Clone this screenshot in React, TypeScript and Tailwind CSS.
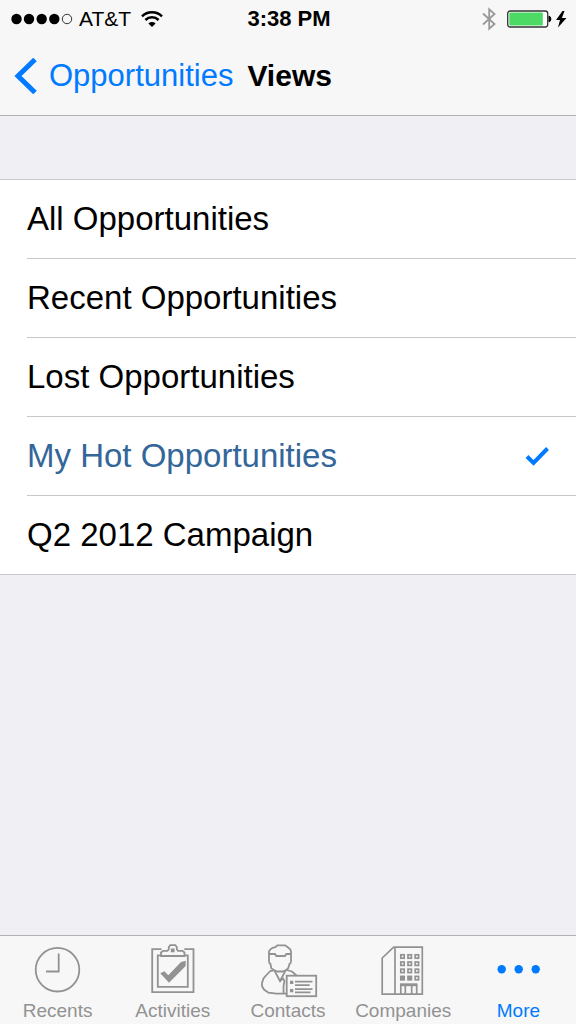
import { useState } from "react";

const views = [
  "All Opportunities",
  "Recent Opportunities",
  "Lost Opportunities",
  "My Hot Opportunities",
  "Q2 2012 Campaign",
];

const SignalDots = () => (
  <svg className="h-3 w-[62px]" viewBox="0 0 62 12" aria-hidden="true">
    <circle cx="5.5" cy="6" r="5.2" />
    <circle cx="18" cy="6" r="5.2" />
    <circle cx="30.7" cy="6" r="5.2" />
    <circle cx="43.3" cy="6" r="5.2" />
    <circle cx="56" cy="6" r="4.7" fill="none" stroke="#333" />
  </svg>
);

const WifiIcon = () => (
  <svg className="h-4 w-[22px]" viewBox="0 0 22 16" aria-hidden="true">
    <path d="M11 16 7.4 12.4a5.2 5.2 0 0 1 7.2 0Z" />
    <path
      d="M4.4 9a9.4 9.4 0 0 1 13.2 0M1 5.4a14.2 14.2 0 0 1 20 0"
      fill="none"
      stroke="black"
      strokeWidth="2.5"
    />
  </svg>
);

const BluetoothIcon = () => (
  <svg className="h-6 w-[14px]" viewBox="0 0 14 24" aria-hidden="true">
    <path
      d="M1 6.5 12.5 17 7.2 21.7V2.3L12.5 7 1 17.5"
      fill="none"
      stroke="#999"
      strokeWidth="1.8"
    />
  </svg>
);

const BatteryIcon = () => (
  <svg className="h-[18px] w-[60px]" viewBox="0 0 60 18" aria-hidden="true">
    <rect x="0.7" y="1" width="40" height="16" rx="2.5" fill="white" stroke="#333" strokeWidth="1.3" />
    <rect x="2.3" y="2.6" width="33.5" height="12.8" rx="1" fill="#4cd964" />
    <path d="M42 6.2c2.4 0 2.4 5.6 0 5.6Z" stroke="black" />
    <path d="M55.5 1 49 10h4l-2 7.5 8.5-9.5h-4.6l2.6-7Z" />
  </svg>
);

const ClockIcon = () => (
  <svg className="h-14 w-[60px]" viewBox="0 0 60 56" fill="none" stroke="#929292" strokeWidth="1.8" aria-hidden="true">
    <circle cx="29.5" cy="27.7" r="21.8" />
    <path d="M30.7 11.5v18H18" />
  </svg>
);

const ClipboardIcon = () => (
  <svg className="h-14 w-[60px]" viewBox="0 0 60 56" fill="none" stroke="#929292" strokeWidth="1.8" aria-hidden="true">
    <path d="M18.5 7.2H9.2v43h41.3v-43h-9.2" />
    <path d="M18 13.3h-3.2v31.5h30V13.3h-3" />
    <path d="M18 14v-3.5l2-1.7h4.5l1.3-1.6V5l1.5-1.8h5L33.8 5v2.2l1.2 1.6h4.5l2 1.7V14Z" />
    <path d="M28.7 9.3V7.5h2v1.8Z" />
    <path
      d="M17.3 31.3 21.3 29.3 25.3 33.3 38 20 42.7 18.7V24L26 40.7Z"
      fill="#929292"
      stroke="none"
    />
  </svg>
);

const ContactIcon = () => (
  <svg className="h-14 w-[60px]" viewBox="0 0 60 56" fill="none" stroke="#929292" strokeWidth="1.8" aria-hidden="true">
    <path d="M11 20.5V9.3l1.5-2 2-1.5 3-.7 1.7-1.8h8l2.2 1.7 2.6 2 1 2.3v11.2" />
    <path d="M11 12h6l1.3 2H27l1.3-2h4.5" />
    <path d="M11 20.5 12.5 22l.8 4.3 3 2L22 39l5.7-10.7 2.5-2L31.5 22l1.5-1.5" />
    <path d="m16.3 28.3 3 1.2h5.4l3-1.2" />
    <path d="M15.5 28.3 12.3 29 8 33.5 5.5 36.5 4 41v3.2l2 3.3 4.5 3.2 8 1h10" />
    <path d="M28.5 28 34 29.5l4.5 4M22 39l3-2.5 1.5 2.5-1 5v7" />
    <rect x="28.7" y="33.7" width="29.5" height="20.5" fill="#f7f7f7" />
    <path d="M37 39.7h17.5M37 43.2h14.7M37 47.2h17.5M37 50.3h15.5" />
    <path d="M32 38.7h3.3V42H32ZM32 47h3.3v3.3H32Z" fill="#929292" stroke="none" />
  </svg>
);

const BuildingIcon = () => (
  <svg className="h-14 w-[60px]" viewBox="0 0 60 56" fill="none" stroke="#929292" strokeWidth="1.7" aria-hidden="true">
    <path d="M9.2 52.2V16L20.7 5.2h28.6v47ZM22 5.2v47" />
    {[12.8, 20, 27.2, 34.4].map((y) =>
      [27.8, 35, 42.2].map((x) => (
        <rect
          key={`${x}-${y}`}
          x={x}
          y={y}
          width="3.4"
          height="3.4"
          fill={y > 34 && x < 40 ? "#929292" : "none"}
        />
      )),
    )}
    <path d="M27 41.3h17.5v2.9H27Z" fill="#929292" stroke="none" />
    <path d="M27.8 43v9M32.3 43v9M38.7 43v9M43.7 43v9" />
  </svg>
);

const MoreIcon = () => (
  <svg className="h-14 w-[60px]" viewBox="0 0 60 56" fill="#007aff" aria-hidden="true">
    <circle cx="13.7" cy="27.3" r="4.2" />
    <circle cx="30.7" cy="27.3" r="4.2" />
    <circle cx="47.7" cy="27.3" r="4.2" />
  </svg>
);

const tabs = [
  { label: "Recents", Icon: ClockIcon },
  { label: "Activities", Icon: ClipboardIcon },
  { label: "Contacts", Icon: ContactIcon },
  { label: "Companies", Icon: BuildingIcon },
  { label: "More", Icon: MoreIcon, active: true },
];

const App = () => {
  const [selected, setSelected] = useState("My Hot Opportunities");

  return (
    <div className="flex min-h-screen flex-col bg-[#efeff4] font-['Liberation_Sans',Arial,sans-serif] text-black">
      <header className="border-b border-[#b2b2b6] bg-[#f7f7f7]">
        <div className="grid h-[37px] grid-cols-[1fr_auto_1fr] items-center pr-[9px] pl-[11px]">
          <div className="flex items-center gap-1.5">
            <SignalDots />
            <span className="text-[21px] leading-6">AT&amp;T</span>
            <span className="pl-1">
              <WifiIcon />
            </span>
          </div>
          <time className="text-[22px] leading-6 font-bold">3:38 PM</time>
          <div className="flex items-center justify-end gap-[11px]">
            <BluetoothIcon />
            <BatteryIcon />
          </div>
        </div>

        <div className="flex h-[78px] items-center gap-[14px] px-[14px]">
          <button type="button" className="flex items-center gap-3 text-[#007aff]">
            <svg className="h-9 w-[23px]" viewBox="0 0 23 36" aria-hidden="true">
              <path d="M21 1.5 4 18l17 16.5" fill="none" stroke="currentColor" strokeWidth="5" />
            </svg>
            <span className="text-[31px] leading-9">Opportunities</span>
          </button>
          <h1 className="text-[30px] leading-9 font-bold">Views</h1>
        </div>
      </header>

      <main className="flex-1 pt-[63px]">
        <ul className="border-y border-[#c8c7cc] bg-white pl-[27px]">
          {views.map((view) => (
            <li key={view} className="border-b border-[#c8c7cc] last:border-b-0">
              <button
                type="button"
                aria-pressed={view === selected}
                onClick={() => setSelected(view)}
                className="flex h-[78px] w-full items-center justify-between pr-[27px] text-left text-[33px] leading-10 aria-pressed:text-[#336699]"
              >
                {view}
                {view === selected && (
                  <svg className="h-5 w-6" viewBox="0 0 24 20" aria-hidden="true">
                    <path d="m2 10.5 6.5 6.5L22.5 2.5" fill="none" stroke="#007aff" strokeWidth="4" />
                  </svg>
                )}
              </button>
            </li>
          ))}
        </ul>
      </main>

      <nav className="grid grid-cols-5 border-t border-[#b2b2b6] bg-[#f7f7f7] pt-1.5">
        {tabs.map(({ label, Icon, active }) => (
          <button
            key={label}
            type="button"
            aria-current={active ? "page" : undefined}
            className="flex flex-col items-center text-[19px] leading-[26px] text-[#929292] aria-[current=page]:text-[#007aff]"
          >
            <Icon />
            {label}
          </button>
        ))}
      </nav>
    </div>
  );
};

export default App;
